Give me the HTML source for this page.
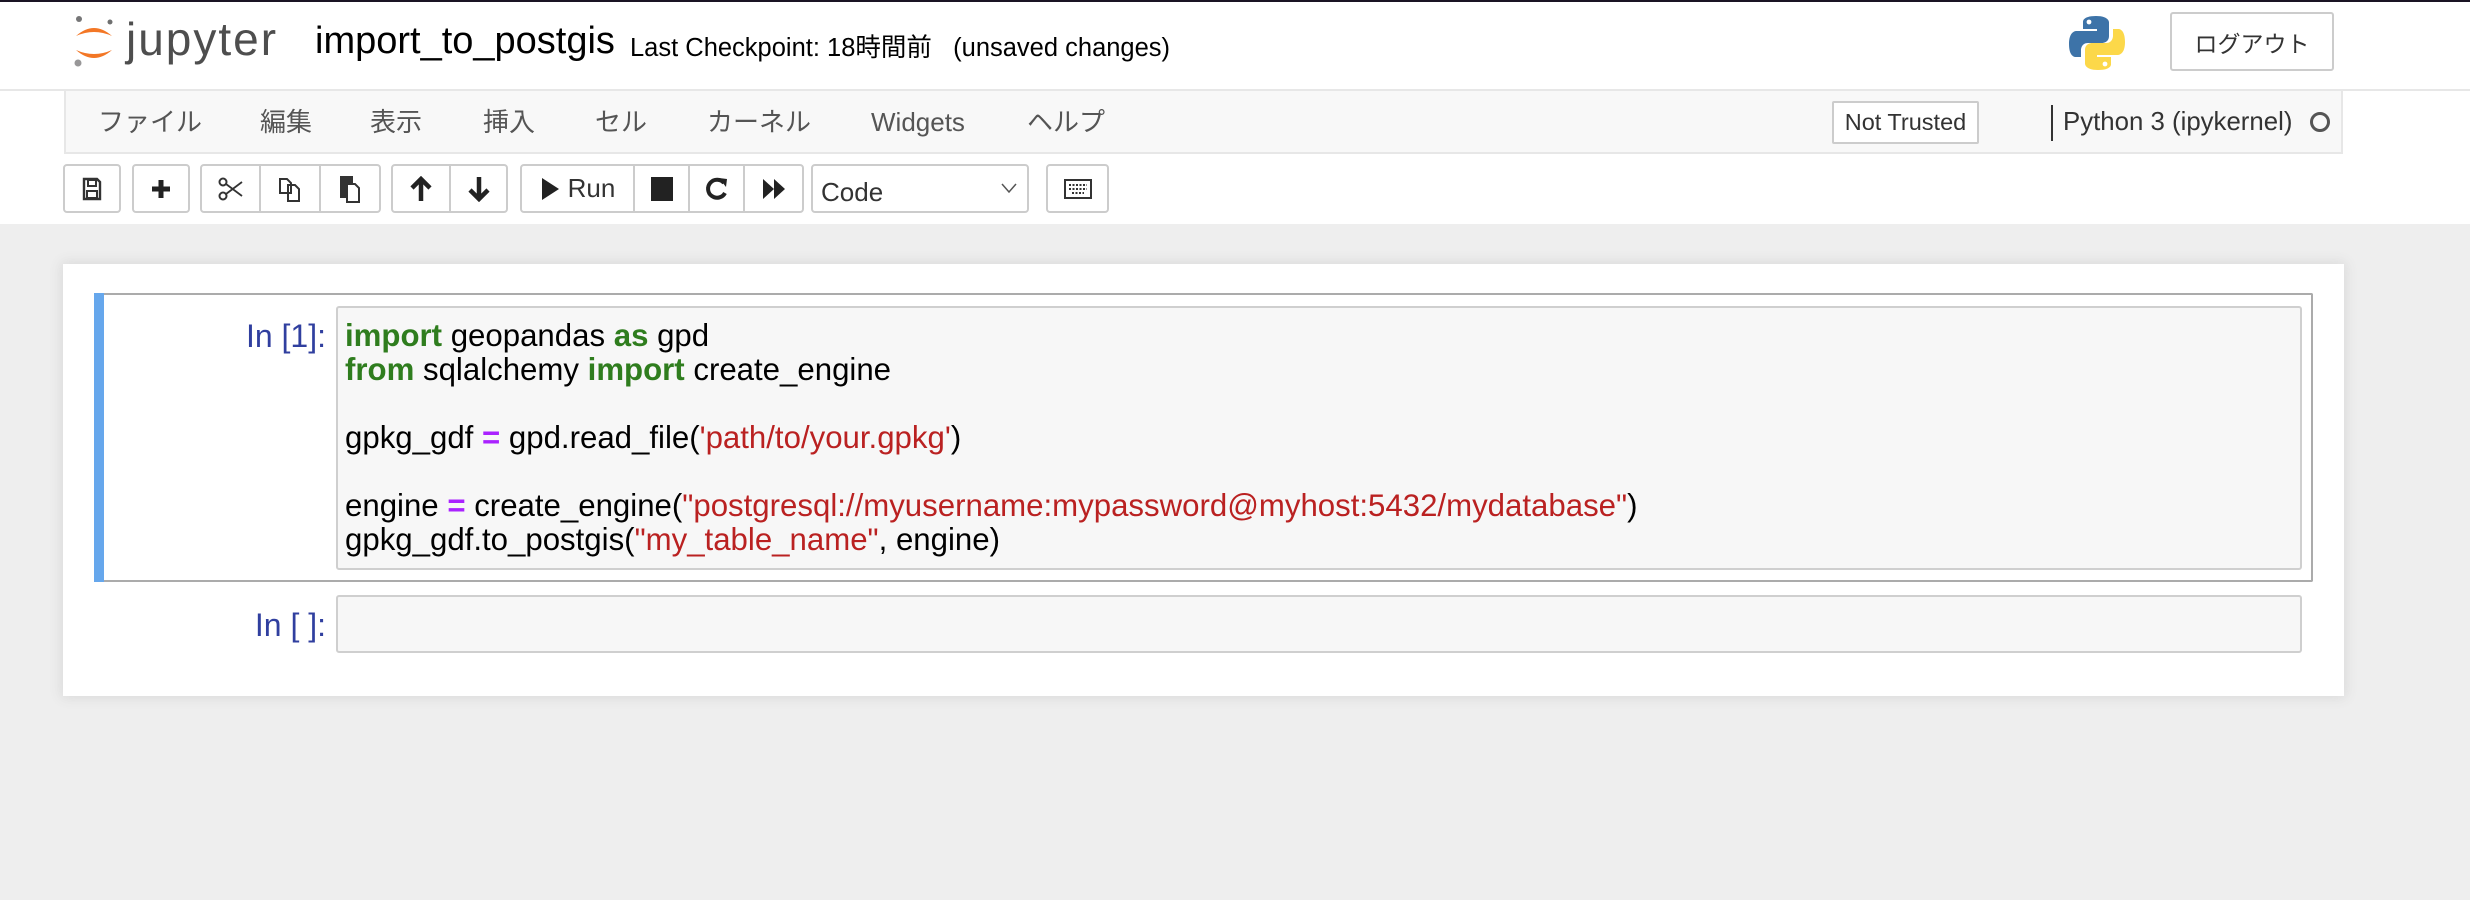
<!DOCTYPE html>
<html><head><meta charset="utf-8"><style>
*{box-sizing:border-box;margin:0;padding:0}
body{width:2470px;height:900px;background:#eeeeee;font-family:"Liberation Sans","Noto Sans CJK JP",sans-serif;position:relative;overflow:hidden;color:#000}
.abs{position:absolute}
#hdr{left:0;top:0;width:2470px;height:224px;background:#fff}
#topline{left:0;top:0;width:2470px;height:2px;background:#1a1424}
#hsep{left:0;top:89px;width:2470px;height:2px;background:#e7e7e7}
.btn{position:absolute;background:#fff;border:2px solid #ccc;border-radius:4px;height:49px;top:164px}
.seg{position:absolute;top:0;height:45px;border-right:2px solid #ccc;display:flex;align-items:center;justify-content:center}
.code{font-size:31.2px;line-height:34px;white-space:pre;color:#000}
.k{color:#2f7d1e;font-weight:bold}.o{color:#aa22ff;font-weight:bold}.s{color:#ba2121}
.prompt{color:#303f9f;font-size:32px;text-align:right}
.menu span{position:absolute;top:0;line-height:36px}
</style></head><body>
<div id="hdr" class="abs"></div>
<div id="topline" class="abs"></div>
<div id="hsep" class="abs"></div>
<svg class="abs" style="left:72px;top:14px" width="46" height="56" viewBox="0 0 46 56">
<circle cx="7" cy="5" r="3" fill="#767677"/>
<circle cx="6" cy="49" r="3.5" fill="#989798"/>
<circle cx="38" cy="8" r="2.5" fill="#6f7070"/>
<path d="M4 22 Q22 6 40 22 Q22 14 4 22Z" fill="#f37726"/>
<path d="M4 36 Q22 52 40 36 Q22 44 4 36Z" fill="#f37726"/>
</svg>
<div class="abs" style="left:126px;top:12px;font-size:46px;color:#4e4e4e;letter-spacing:2px">jupyter</div>
<div class="abs" style="left:315px;top:20px;font-size:38px;color:#000">import_to_postgis</div>
<div class="abs" style="left:630px;top:27px;font-size:25.5px;color:#000">Last Checkpoint: 18時間前&nbsp;&nbsp;&nbsp;(unsaved changes)</div>
<svg class="abs" style="left:2068px;top:14px" width="58" height="58" viewBox="0 0 58 58">
<path d="M28 2 C14 2 15 8 15 8 L15 15 L29 15 L29 17 L9 17 C9 17 1 16 1 30 C1 44 8 43 8 43 L13 43 L13 36 C13 36 13 29 20 29 L34 29 C34 29 41 29 41 22 L41 9 C41 9 42 2 28 2Z" fill="#3d73a8"/>
<circle cx="21" cy="8" r="2.4" fill="#fff"/>
<path d="M30 56 C44 56 43 50 43 50 L43 43 L29 43 L29 41 L49 41 C49 41 57 42 57 28 C57 14 50 15 50 15 L45 15 L45 22 C45 22 45 29 38 29 L24 29 C24 29 17 29 17 36 L17 49 C17 49 16 56 30 56Z" fill="#fcd849"/>
<circle cx="37" cy="50" r="2.4" fill="#fff"/>
</svg>
<div class="abs" style="left:2170px;top:12px;width:164px;height:59px;border:2px solid #ccc;border-radius:3px;background:#fff;font-size:23px;display:flex;align-items:center;justify-content:center;color:#333">ログアウト</div>
<div class="abs" style="left:64px;top:91px;width:2279px;height:63px;background:#f8f8f8;border:2px solid #e7e7e7;border-top:none"></div>
<div class="abs menu" style="top:104px;font-size:26px;color:#555;left:0;width:1200px;height:36px">
<span style="left:98px">ファイル</span><span style="left:260px">編集</span><span style="left:370px">表示</span><span style="left:483px">挿入</span><span style="left:595px">セル</span><span style="left:707px">カーネル</span><span style="left:871px;top:0px">Widgets</span><span style="left:1027px">ヘルプ</span></div>
<div class="abs" style="left:1832px;top:101px;width:147px;height:43px;border:2px solid #ccc;border-radius:2px;background:#fff;font-size:23.5px;color:#333;display:flex;align-items:center;justify-content:center">Not Trusted</div>
<div class="abs" style="left:2051px;top:105px;width:2px;height:36px;background:#333"></div>
<div class="abs" style="left:2063px;top:108px;font-size:25.8px;color:#333">Python 3 (ipykernel)</div>
<div class="abs" style="left:2310px;top:112px;width:20px;height:20px;border:3px solid #555;border-radius:50%"></div>
<div class="btn" style="left:63px;width:58px"><div class="seg" style="width:54px;border:none"><svg width="20" height="24" viewBox="0 0 20 24"><path d="M2 2 H15 L18 5 V22 H2Z" fill="none" stroke="#333" stroke-width="2.4"/><rect x="6" y="3" width="8" height="6" fill="none" stroke="#333" stroke-width="2"/><rect x="5" y="14" width="10" height="7" fill="none" stroke="#333" stroke-width="2"/></svg></div></div>
<div class="btn" style="left:132px;width:58px"><div class="seg" style="width:54px;border:none"><svg width="20" height="20"><path d="M10 1 V19 M1 10 H19" stroke="#222" stroke-width="5"/></svg></div></div>
<div class="btn" style="left:200px;width:181px">
<div class="seg" style="left:0;width:59px"><svg width="26" height="24" viewBox="0 0 26 24"><circle cx="5" cy="5" r="3.5" fill="none" stroke="#333" stroke-width="2"/><circle cx="5" cy="19" r="3.5" fill="none" stroke="#333" stroke-width="2"/><path d="M8 7 L24 19 M8 17 L24 5" stroke="#333" stroke-width="1.8"/></svg></div>
<div class="seg" style="left:59px;width:60px"><svg width="24" height="28" viewBox="0 0 24 28"><path d="M2 4 H9 L13 8 V18 H2Z M10 10 H17 L21 14 V26 H10Z" fill="#fff" stroke="#333" stroke-width="2"/></svg></div>
<div class="seg" style="left:119px;width:58px;border:none"><svg width="24" height="30" viewBox="0 0 24 30"><rect x="2" y="2" width="13" height="22" fill="#333"/><path d="M9 10 H17 L21 14 V28 H9Z" fill="#fff" stroke="#333" stroke-width="2"/></svg></div></div>
<div class="btn" style="left:391px;width:117px">
<div class="seg" style="left:0;width:58px"><svg width="22" height="26"><path d="M11 25 V4 M2 12 L11 3 L20 12" fill="none" stroke="#222" stroke-width="4.5"/></svg></div>
<div class="seg" style="left:58px;width:55px;border:none"><svg width="22" height="26"><path d="M11 1 V22 M2 14 L11 23 L20 14" fill="none" stroke="#222" stroke-width="4.5"/></svg></div></div>
<div class="btn" style="left:520px;width:284px">
<div class="seg" style="left:0;width:113px;font-size:26px;color:#333"><svg width="20" height="24" style="margin-right:8px"><path d="M2 1 L19 12 L2 23Z" fill="#222"/></svg>Run</div>
<div class="seg" style="left:113px;width:55px"><div style="width:22px;height:24px;background:#222"></div></div>
<div class="seg" style="left:168px;width:55px"><svg width="24" height="26" viewBox="0 0 24 26"><path d="M19 7 A9 9 0 1 0 20 17" fill="none" stroke="#222" stroke-width="4"/><path d="M14 2 L22 3 L21 11Z" fill="#222"/></svg></div>
<div class="seg" style="left:223px;width:57px;border:none"><svg width="24" height="24"><path d="M1 2 L12 12 L1 22Z M12 2 L23 12 L12 22Z" fill="#222"/></svg></div></div>
<div class="btn" style="left:811px;width:218px;font-size:26px;color:#333"><span class="abs" style="left:8px;top:11px">Code</span><svg class="abs" style="left:188px;top:16px" width="16" height="12"><path d="M1 2 L8 10 L15 2" fill="none" stroke="#555" stroke-width="1.5"/></svg></div>
<div class="btn" style="left:1046px;width:63px"><div class="seg" style="width:59px;border:none"><svg width="28" height="20" viewBox="0 0 28 20"><rect x="1" y="1" width="26" height="18" fill="none" stroke="#333" stroke-width="2"/><path d="M5 6 H23 M5 10 H23 M8 14 H20" stroke="#333" stroke-width="2" stroke-dasharray="2 1.5"/></svg></div></div>
<div class="abs" style="left:63px;top:264px;width:2281px;height:432px;background:#fff;box-shadow:0 0 12px 1px rgba(87,87,87,0.15)"></div>
<div class="abs" style="left:94px;top:293px;width:2219px;height:289px;border:2px solid #ababab;border-left:none;border-radius:0 2px 2px 0"></div>
<div class="abs" style="left:94px;top:293px;width:10px;height:289px;background:#66a7ec"></div>
<div class="abs prompt" style="left:150px;top:318px;width:176px">In [1]:</div>
<div class="abs" style="left:336px;top:306px;width:1966px;height:264px;background:#f7f7f7;border:2px solid #cfcfcf;border-radius:3px"></div>
<div class="abs code" style="left:345px;top:319px"><span class="k">import</span> geopandas <span class="k">as</span> gpd
<span class="k">from</span> sqlalchemy <span class="k">import</span> create_engine

gpkg_gdf <span class="o">=</span> gpd.read_file(<span class="s">'path/to/your.gpkg'</span>)

engine <span class="o">=</span> create_engine(<span class="s">"postgresql://myusername:mypassword@myhost:5432/mydatabase"</span>)
gpkg_gdf.to_postgis(<span class="s">"my_table_name"</span>, engine)</div>
<div class="abs prompt" style="left:150px;top:607px;width:176px">In [ ]:</div>
<div class="abs" style="left:336px;top:595px;width:1966px;height:58px;background:#f7f7f7;border:2px solid #cfcfcf;border-radius:3px"></div>
</body></html>
